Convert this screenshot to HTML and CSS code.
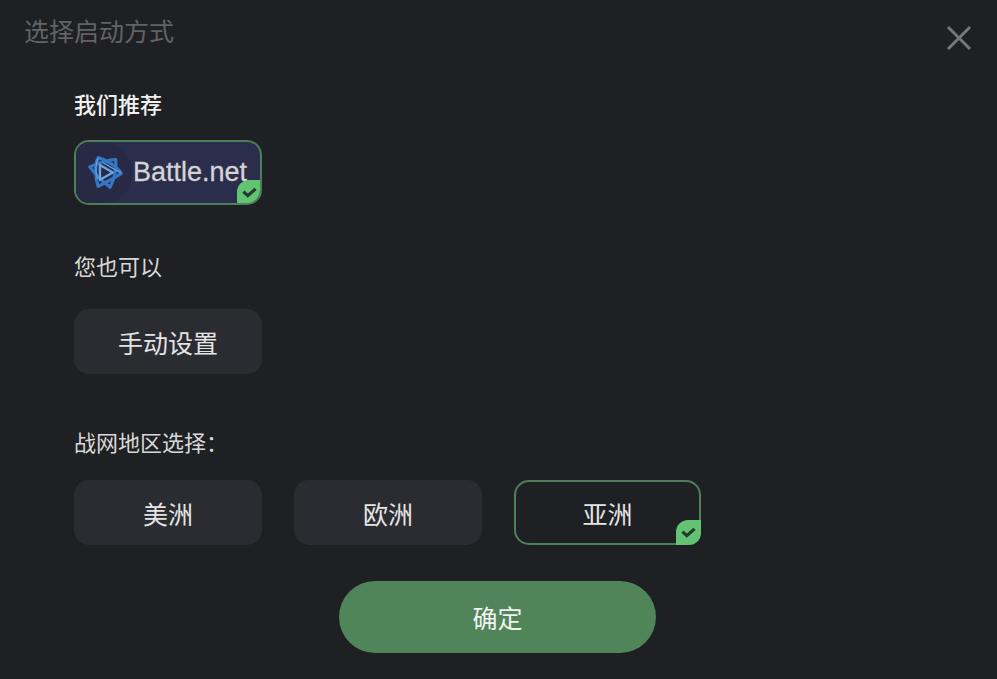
FILE: index.html
```html
<!DOCTYPE html>
<html lang="zh">
<head>
<meta charset="utf-8">
<title>选择启动方式</title>
<link rel="stylesheet" href="styles.css">
</head>
<body>
<main class="dialog">
  <header class="head">
    <h1 class="title">选择启动方式</h1>
    <svg class="close" viewBox="0 0 26 26" aria-label="关闭"><path d="M2 2 L24 24 M24 2 L2 24"/></svg>
  </header>
  <section class="content">
    <h2 class="label strong">我们推荐</h2>
    <div class="row row-a">
      <button class="tile bnet selected">
        <span class="halo"></span>
        <svg class="logo" viewBox="0 0 40 40">
          <g fill="none" stroke-linejoin="round" stroke-linecap="round">
            <g stroke="#3577c4" stroke-width="3.4">
              <path d="M12 5 C20 7 32 14 37 22 C30 27 20 32 12 36 C9 27 8 13 12 5Z"/>
              <path d="M3 15 C14 10 26 7 31 7 C32 15 30 27 25 37 C17 31 8 22 3 15Z"/>
            </g>
            <path d="M14 13 L28 21 L14 29Z" stroke="#6aa5e6" stroke-width="2.6"/>
            <path d="M12 6 C9 13 9 20 11 27 M36 21 C30 18 24 14 18 11" stroke="#5d9ce0" stroke-width="1.6"/>
          </g>
        </svg>
        <span class="bnet-name">Battle.net</span>
        <span class="badge"><svg viewBox="0 0 14 14"><path d="M2 6.2 L5.6 9.6 L12 4"/></svg></span>
      </button>
    </div>
    <h2 class="label second">您也可以</h2>
    <div class="row row-b">
      <button class="tile">手动设置</button>
    </div>
    <h2 class="label third">战网地区选择：</h2>
    <div class="row row-c">
      <button class="tile">美洲</button>
      <button class="tile">欧洲</button>
      <button class="tile selected plain">亚洲<span class="badge"><svg viewBox="0 0 14 14"><path d="M2 6.2 L5.6 9.6 L12 4"/></svg></span></button>
    </div>
  </section>
  <footer class="foot">
    <button class="confirm">确定</button>
  </footer>
</main>
</body>
</html>
```
FILE: styles.css
```css
* { box-sizing: border-box; }
html, body { margin: 0; height: 100%; }
body {
  background: #1f2024;
  font-family: "Noto Sans CJK SC", "Liberation Sans", sans-serif;
  overflow: hidden;
}
.dialog { width: 997px; height: 679px; display: flex; flex-direction: column; }
.head {
  display: flex;
  justify-content: space-between;
  align-items: flex-start;
  padding: 16px 25px 0 24px;
  height: 89px;
}
.title { margin: 0; font-size: 25px; line-height: 29px; font-weight: 400; color: #636365; }
.close { width: 26px; height: 26px; margin-top: 9px; }
.close path { fill: none; stroke: #77777a; stroke-width: 3; }
.content { padding-left: 74px; }
.label { margin: 0; font-size: 22px; line-height: 28px; font-weight: 400; color: #d8d8d8; }
.strong { color: #f0f0f0; font-weight: 500; }
.second { margin-top: 46px; }
.third { margin-top: 53px; }
.row { display: flex; gap: 32px; }
.row-a { margin-top: 23px; }
.row-b { margin-top: 30px; }
.row-c { margin-top: 25px; }
.tile {
  position: relative;
  width: 188px;
  height: 65px;
  border: 0;
  border-radius: 15px;
  background: #2b2c31;
  color: #e4e4e4;
  font: inherit;
  font-size: 25px;
  padding: 0;
}
.selected { border: 2px solid #4c8058; background: #1f2024; width: 187px; }
.bnet {
  width: 188px;
  background: #2b2d4d;
  display: flex;
  align-items: center;
  padding-left: 11px;
  overflow: hidden;
}
.halo {
  position: absolute;
  left: 0;
  top: 0;
  width: 56px;
  height: 61px;
  border-radius: 0 50% 50% 0;
  background: #272945;
}
.logo {
  position: relative;
  width: 37px;
  height: 37px;
  margin-top: -2px;
  flex: none;
  filter: blur(0.5px);
}
.bnet-name {
  position: relative;
  margin-left: 9px;
  font-family: "Liberation Sans", Arial, sans-serif;
  font-size: 27px;
  font-weight: 400;
  -webkit-text-stroke: 0.3px #d4d4d4;
  color: #d4d4d4;
  line-height: 1;
}
.badge {
  position: absolute;
  right: -2px;
  bottom: -2px;
  width: 25px;
  height: 25px;
  background: #62c472;
  border-radius: 12px 0 12px 0;
  display: flex;
  align-items: center;
  justify-content: center;
}
.badge svg { width: 17px; height: 17px; }
.badge path { fill: none; stroke: #243a2a; stroke-width: 2.6; }
.foot { display: flex; justify-content: center; margin-top: 36px; padding-right: 2px; }
.confirm {
  width: 317px;
  height: 72px;
  border: 0;
  border-radius: 36px;
  background: #4f8558;
  color: #f2f2f2;
  font: inherit;
  font-size: 25px;
}
```
